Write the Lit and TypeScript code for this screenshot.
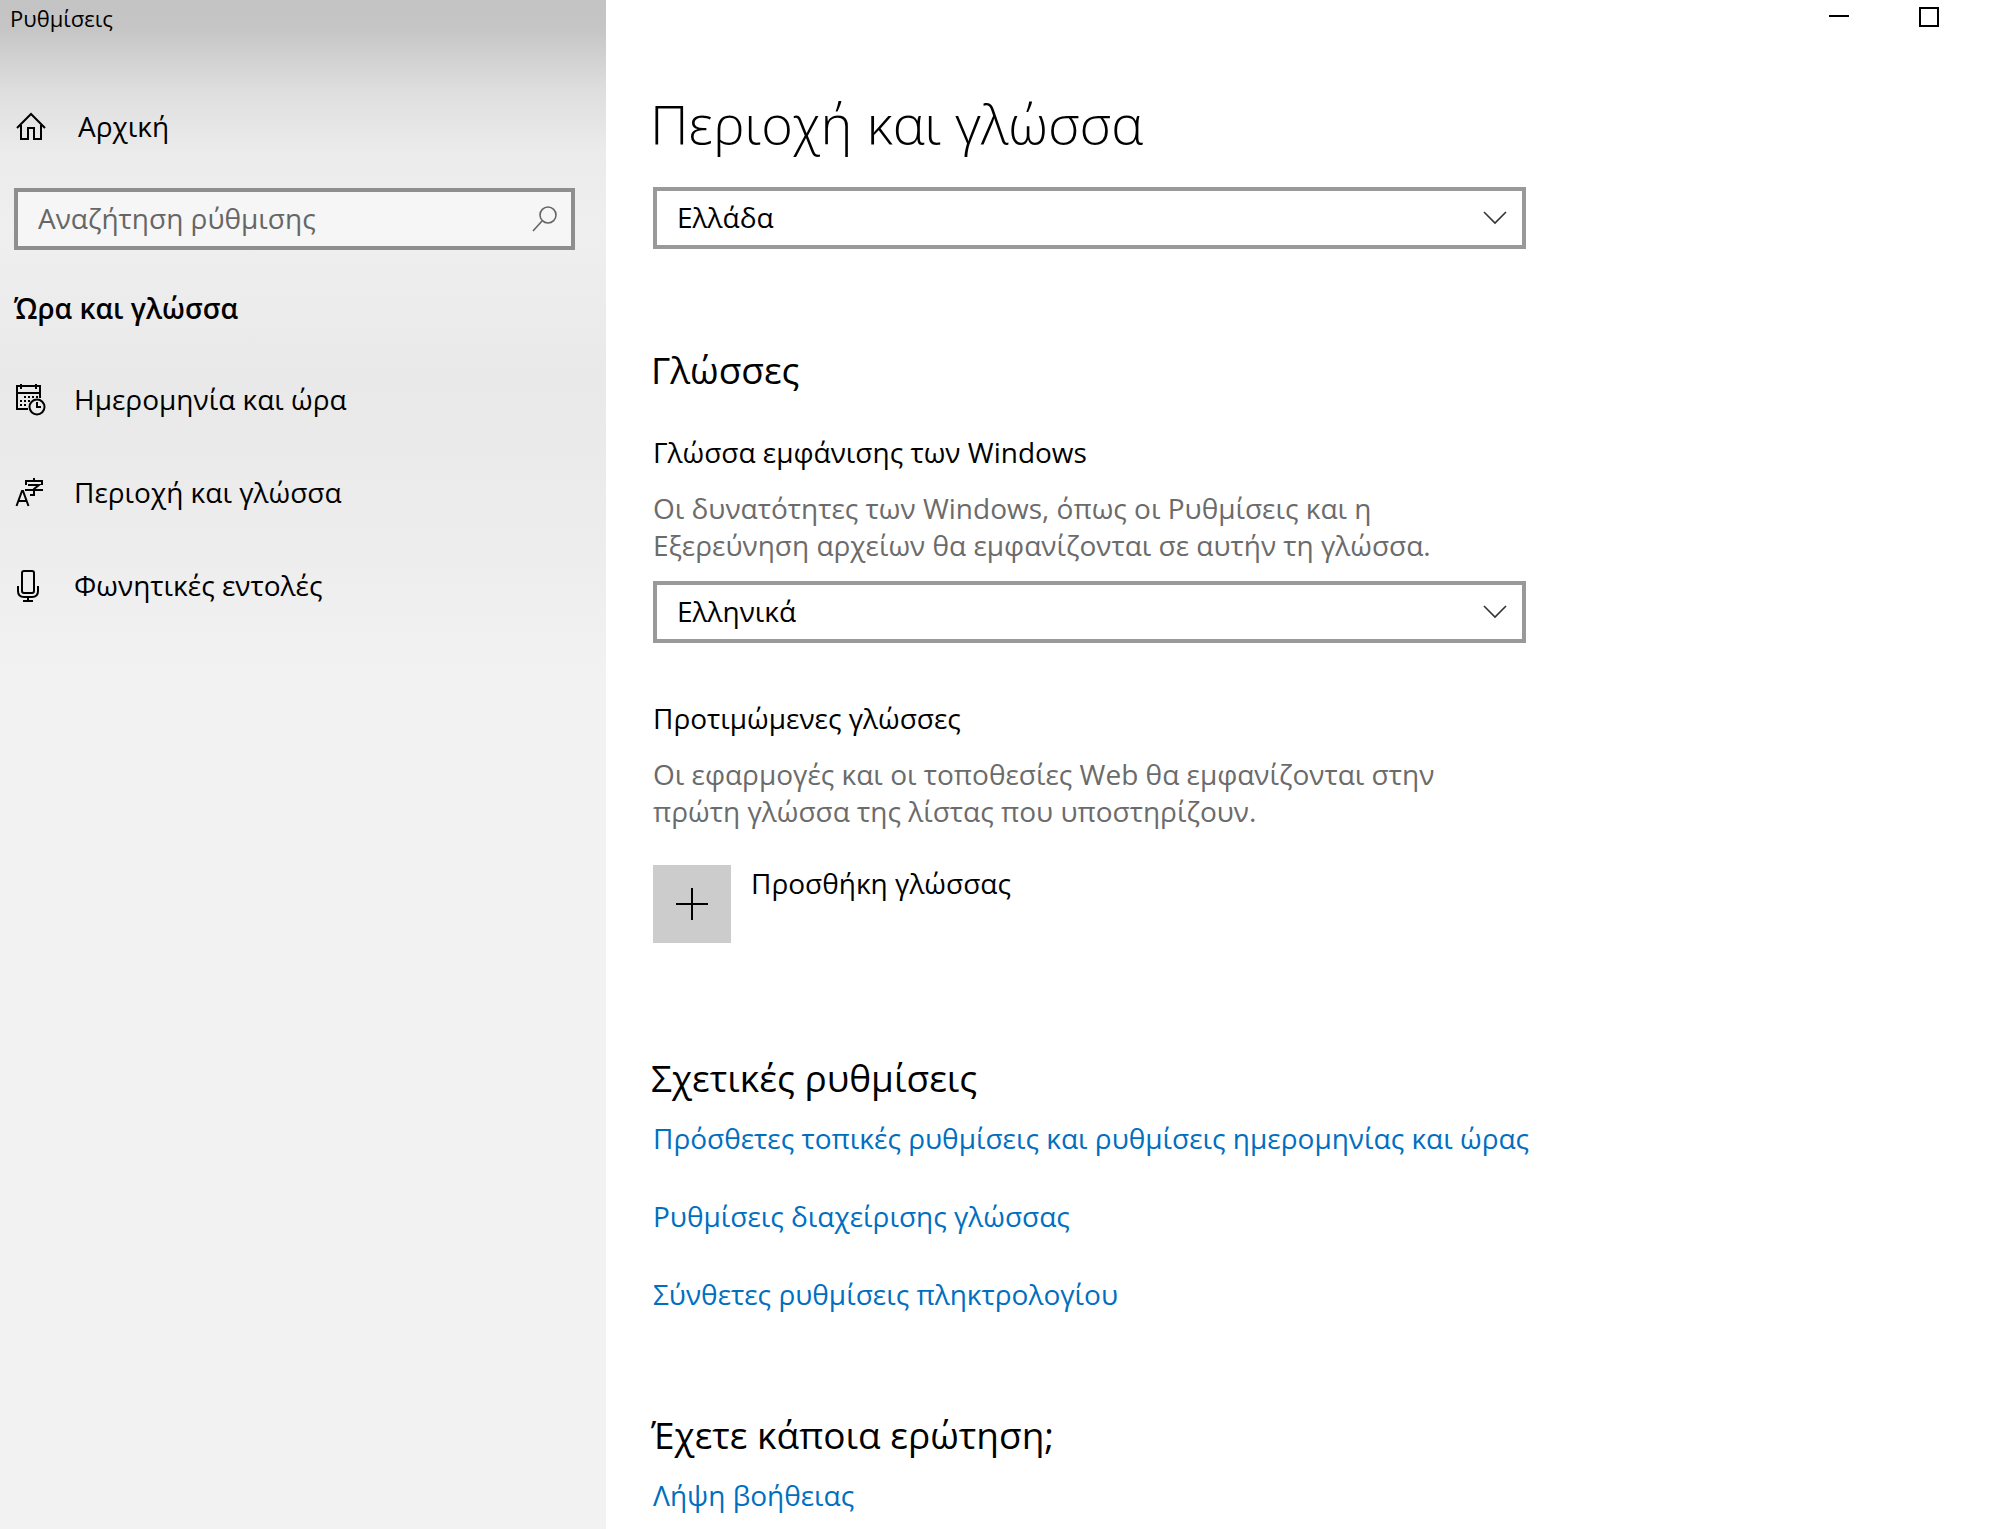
import { LitElement, html, css, svg } from "lit";
import { customElement, property } from "lit/decorators.js";

const icons = {
  home: svg`<path d="M3 17 17 3l14 14M7 14v14h7V17h6v11h7V14" />`,
  calendar: svg`<path d="M14 25H3V2h23v12M3 9h23M7 0v5M22 0v5" /><path d="M10 13h2M14 13h2M18 13h2M22 13h2M6 17h2M10 17h2M14 17h2M6 21h2M10 21h2" /><circle cx="23" cy="23" r="7.5" /><path d="M23 18v5h4" />`,
  language: svg`<path d="M2.500 29 8 14h1l5.500 15M4.500 24h8" /><path d="M12 8V4h16v4M20 1v3M14 8h11l-5 4v6h-4M11 13h18" />`,
  microphone: svg`<rect x="8" y="1" width="12" height="22" rx="2" /><path d="M4 16v5q0 6 6 6h8q6 0 6-6v-5M14 27v4M9 31h10" />`,
  search: svg`<circle cx="16" cy="9" r="8" /><path d="M10 15 1 25" />`,
  chevron: svg`<path d="M1 1 12 12 23 1" />`,
  plus: svg`<path d="M16 0v32M0 16h32" />`,
};

@customElement("settings-select")
export class SettingsSelect extends LitElement {
  @property() value = "";
  @property() label = "";
  static styles = css`
    :host { display: block; position: relative; }
    .select {
      display: block; box-sizing: border-box; width: 100%; height: 62px;
      padding: 0 64px 2px 20px; border: 4px solid #999; border-radius: 0;
      appearance: none; background: #fff; color: #000; font: inherit;
    }
    .chevron {
      position: absolute; right: 19px; top: 24px; width: 24px; height: 14px;
      fill: none; stroke: #333; stroke-width: 1.6; pointer-events: none;
    }
  `;
  render() {
    return html`
      <select class="select" aria-label=${this.label}><option>${this.value}</option></select>
      <svg class="chevron" viewBox="0 0 24 14" aria-hidden="true">${icons.chevron}</svg>
    `;
  }
}

@customElement("app-root")
export class AppRoot extends LitElement {
  static styles = css`
    :host {
      display: grid; grid-template-columns: 606px minmax(0, 1fr); min-height: 100vh;
      background: #fff; color: #000; overflow: hidden;
      font: 28px/37px "Open Sans", "Noto Sans", sans-serif;
    }
    svg { fill: none; stroke: #000; stroke-width: 2; overflow: visible; flex: none; }
    h1, h2, h3, p { margin: 0; font-size: inherit; font-weight: 400; }
    a { text-decoration: none; color: inherit; }
    .sidebar {
      padding: 0 31px 0 14px;
      background: linear-gradient(#c3c3c3 0, #c5c5c5 28px, #dedede 90px, #ebebeb 150px, #efefef 230px, #e9e9ea 380px, #ececed 520px, #f2f2f2 680px, #f2f2f2 100%);
    }
    .app-title { margin-left: -4px; font-size: 22px; line-height: 37px; }
    .home { display: flex; align-items: center; gap: 32px; margin-top: 71px; }
    .icon { width: 32px; height: 32px; }
    .search {
      display: flex; align-items: center; box-sizing: border-box; height: 62px; margin-top: 43px;
      padding: 0 14px 0 20px; border: 4px solid #8e8e8e; background: #f6f6f6;
    }
    .search-input {
      flex: 1; min-width: 0; padding: 0 0 2px; border: 0; outline: 0; background: none; font: inherit; color: #000;
    }
    .search-input::placeholder { color: #666; opacity: 1; }
    .search-button { display: flex; padding: 0; border: 0; background: none; }
    .search-icon { width: 25px; height: 26px; stroke: #666; stroke-width: 1.6; }
    .group { margin-top: 40px; font-weight: 600; }
    .nav { display: grid; gap: 56px; margin-top: 54px; }
    .nav-item { display: flex; align-items: center; gap: 28px; }
    .main { display: flex; flex-direction: column; }
    .window-bar { display: flex; justify-content: flex-end; padding-right: 26px; }
    .window-button {
      display: grid; place-items: center; width: 90px; height: 34px; padding: 0; border: 0; background: none;
    }
    .window-icon { width: 20px; height: 20px; }
    .content { width: min(873px, 100% - 94px); margin-left: 47px; padding: 53px 0 14px; }
    .page-title { margin-left: -3px; font-size: 54px; line-height: 72px; font-weight: 350; }
    .region { margin-top: 28px; }
    .section-title { margin-left: -2px; font-size: 37px; line-height: 50px; }
    .languages { margin-top: 96px; }
    .subtitle { margin-top: 39px; }
    .description { max-width: 820px; margin-top: 19px; color: #6b6b6b; }
    .display-language { margin-top: 17px; }
    .preferred { margin-top: 57px; }
    .add { display: flex; gap: 20px; margin-top: 35px; padding: 0; border: 0; background: none; font: inherit; color: #000; }
    .add-tile { display: grid; place-items: center; width: 78px; height: 78px; background: #ccc; }
    .related { margin-top: 110px; }
    .links { display: grid; justify-items: start; gap: 41px; margin-top: 17px; color: #006fbf; white-space: nowrap; }
    .help { margin-top: 97px; }
  `;

  private navItems = [
    { icon: icons.calendar, text: "Ημερομηνία και ώρα" },
    { icon: icons.language, text: "Περιοχή και γλώσσα" },
    { icon: icons.microphone, text: "Φωνητικές εντολές" },
  ];

  private relatedLinks = [
    "Πρόσθετες τοπικές ρυθμίσεις και ρυθμίσεις ημερομηνίας και ώρας",
    "Ρυθμίσεις διαχείρισης γλώσσας",
    "Σύνθετες ρυθμίσεις πληκτρολογίου",
  ];

  render() {
    return html`
      <aside class="sidebar">
        <div class="app-title">Ρυθμίσεις</div>
        <a class="home" href="#home">
          <svg class="icon" viewBox="0 0 32 32" aria-hidden="true">${icons.home}</svg>
          <span>Αρχική</span>
        </a>
        <div class="search">
          <input class="search-input" type="text" placeholder="Αναζήτηση ρύθμισης" aria-label="Αναζήτηση ρύθμισης" />
          <button class="search-button" aria-label="Αναζήτηση">
            <svg class="search-icon" viewBox="0 0 25 26" aria-hidden="true">${icons.search}</svg>
          </button>
        </div>
        <h2 class="group">Ώρα και γλώσσα</h2>
        <nav class="nav">
          ${this.navItems.map((item) => html`
            <a class="nav-item" href="#section">
              <svg class="icon" viewBox="0 0 32 32" aria-hidden="true">${item.icon}</svg>
              <span>${item.text}</span>
            </a>`)}
        </nav>
      </aside>
      <main class="main">
        <div class="window-bar">
          <button class="window-button" aria-label="Ελαχιστοποίηση">
            <svg class="window-icon" viewBox="0 0 20 20" aria-hidden="true"><path d="M0 9h20" /></svg>
          </button>
          <button class="window-button" aria-label="Μεγιστοποίηση">
            <svg class="window-icon" viewBox="0 0 20 20" aria-hidden="true"><path d="M1 1h18v18H1z" /></svg>
          </button>
        </div>
        <div class="content">
          <h1 class="page-title">Περιοχή και γλώσσα</h1>
          <settings-select class="region" label="Χώρα ή περιοχή" value="Ελλάδα"></settings-select>
          <h2 class="section-title languages">Γλώσσες</h2>
          <h3 class="subtitle">Γλώσσα εμφάνισης των Windows</h3>
          <p class="description">Οι δυνατότητες των Windows, όπως οι Ρυθμίσεις και η Εξερεύνηση αρχείων θα εμφανίζονται σε αυτήν τη γλώσσα.</p>
          <settings-select class="display-language" label="Γλώσσα εμφάνισης των Windows" value="Ελληνικά"></settings-select>
          <h3 class="preferred">Προτιμώμενες γλώσσες</h3>
          <p class="description">Οι εφαρμογές και οι τοποθεσίες Web θα εμφανίζονται στην πρώτη γλώσσα της λίστας που υποστηρίζουν.</p>
          <button class="add">
            <span class="add-tile"><svg class="icon" viewBox="0 0 32 32" aria-hidden="true">${icons.plus}</svg></span>
            <span>Προσθήκη γλώσσας</span>
          </button>
          <h2 class="section-title related">Σχετικές ρυθμίσεις</h2>
          <div class="links">
            ${this.relatedLinks.map((text) => html`<a href="#related">${text}</a>`)}
          </div>
          <h2 class="section-title help">Έχετε κάποια ερώτηση;</h2>
          <div class="links"><a href="#help">Λήψη βοήθειας</a></div>
        </div>
      </main>
    `;
  }
}
